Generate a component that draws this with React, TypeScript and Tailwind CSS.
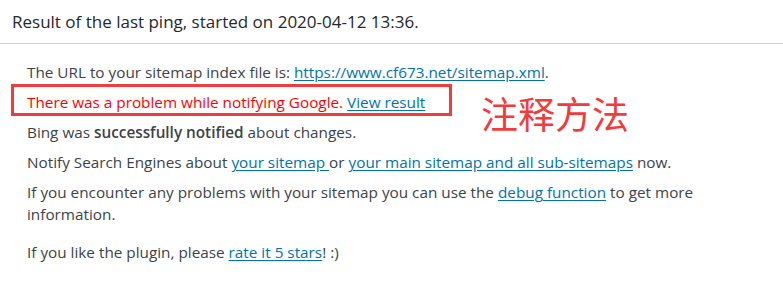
export default function App() {
  const link = "text-[#0073aa] underline underline-offset-2";
  return (
    <div className="relative h-[304px] w-[783px] overflow-hidden bg-white font-['Open_Sans',sans-serif] text-[#3c434a]">
      <div className="flex h-[44px] items-center border-b border-[#ccd0d4] pl-3">
        <h2 className="text-[17px] text-[#23282d]">Result of the last ping, started on 2020-04-12 13:36.</h2>
      </div>
      <div className="flex flex-col pl-[27px] pt-[17px] text-[15.3px] leading-[22px]">
        <p className="mb-[8px]">
          The URL to your sitemap index file is: <a className={link}>https://www.cf673.net/sitemap.xml</a>.
        </p>
        <p className="mb-[8px] text-[#ff0000]">
          There was a problem while notifying Google. <a className={link}>View result</a>
        </p>
        <p className="mb-[8px]">
          Bing was <b className="font-semibold">successfully notified</b> about changes.
        </p>
        <p className="mb-[8px]">
          Notify Search Engines about <a className={link}>your sitemap </a> or{" "}
          <a className={link}>your main sitemap and all sub-sitemaps</a> now.
        </p>
        <p className="mb-[16px] w-[690px]">
          If you encounter any problems with your sitemap you can use the <a className={link}>debug function</a> to get
          more information.
        </p>
        <p>
          If you like the plugin, please <a className={link}>rate it 5 stars</a>! :)
        </p>
      </div>
      <div className="absolute left-[11px] top-[84px] h-[32px] w-[441px] border-[3px] border-[#f03c3c]" />
      <div className="absolute left-[481px] top-[89px] font-['Noto_Sans_CJK_SC',sans-serif] text-[37px] leading-[48px] text-[#f03c3c]">
        注释方法
      </div>
    </div>
  );
}
